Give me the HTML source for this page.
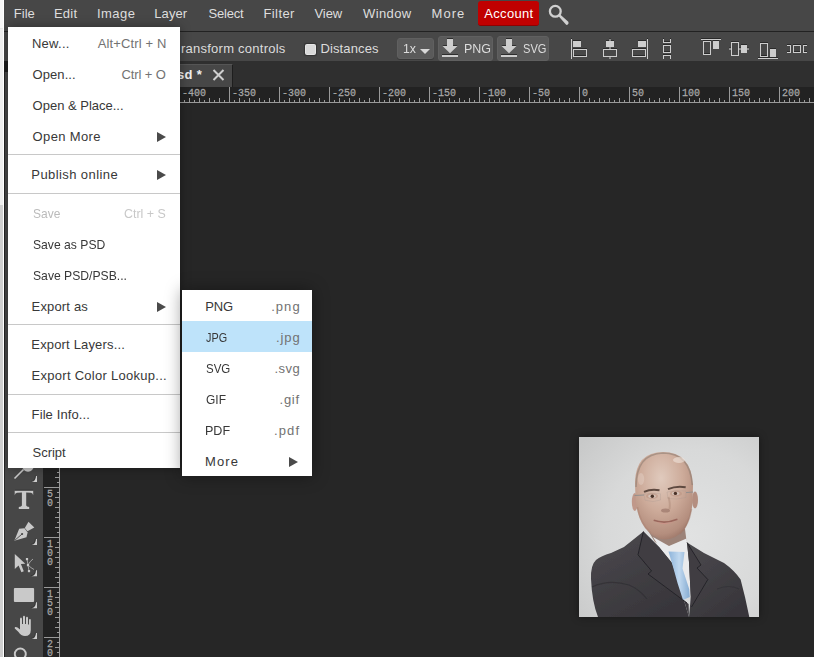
<!DOCTYPE html>
<html><head><meta charset="utf-8"><style>
*{box-sizing:border-box;margin:0;padding:0}
html,body{width:814px;height:657px;overflow:hidden;background:#262626;font-family:"Liberation Sans",sans-serif;position:relative}
.abs{position:absolute}
.tx{position:absolute;white-space:nowrap;font-family:"Liberation Sans",sans-serif}
.btn{position:absolute;background:#5a5a5a;border-radius:3px;border:1px solid #606060}
.arr{position:absolute;width:0;height:0;border-left:9px solid #4a4a4a;border-top:5px solid transparent;border-bottom:5px solid transparent}
.sep{position:absolute;left:0;width:172px;height:1px;background:#c8c8c8}
</style></head><body>
<div class="abs" style="left:4px;top:0;width:810px;height:32px;background:#474747;border-bottom:1px solid #222222"></div>
<div class="tx" style="left:13.70px;top:0px;line-height:27px;font-size:13px;color:#dedede;letter-spacing:0.061px">File</div>
<div class="tx" style="left:54.00px;top:0px;line-height:27px;font-size:13px;color:#dedede;letter-spacing:0.204px">Edit</div>
<div class="tx" style="left:97.00px;top:0px;line-height:27px;font-size:13px;color:#dedede;letter-spacing:0.450px">Image</div>
<div class="tx" style="left:154.30px;top:0px;line-height:27px;font-size:13px;color:#dedede;letter-spacing:0.078px">Layer</div>
<div class="tx" style="left:208.50px;top:0px;line-height:27px;font-size:13px;color:#dedede;letter-spacing:-0.204px">Select</div>
<div class="tx" style="left:263.50px;top:0px;line-height:27px;font-size:13px;color:#dedede;letter-spacing:0.388px">Filter</div>
<div class="tx" style="left:314.50px;top:0px;line-height:27px;font-size:13px;color:#dedede;letter-spacing:-0.085px">View</div>
<div class="tx" style="left:363.00px;top:0px;line-height:27px;font-size:13px;color:#dedede;letter-spacing:0.390px">Window</div>
<div class="tx" style="left:431.60px;top:0px;line-height:27px;font-size:13px;color:#dedede;letter-spacing:1.004px">More</div>
<div class="abs" style="left:478px;top:1px;width:61px;height:25px;background:#c00000;border-radius:3px;border-bottom:1px solid #8e0000"></div>
<div class="tx" style="left:484.30px;top:1px;line-height:25px;font-size:13px;color:#fff;letter-spacing:0.307px">Account</div>
<svg class="abs" style="left:546px;top:3px" width="24" height="24" viewBox="0 0 24 24">
<circle cx="9.3" cy="8.3" r="5.4" fill="none" stroke="#d0d0d0" stroke-width="2.3"/>
<path d="M12.6 13.2 L14.2 11.6 L22.3 18.7 Q23.2 20.4 21.8 21.6 Q20.6 22.4 19.7 21.3 Z" fill="#d0d0d0"/></svg>
<div class="abs" style="left:4px;top:32px;width:810px;height:29px;background:#474747"></div>
<div class="tx" style="left:181.00px;top:41px;line-height:16px;font-size:13px;color:#dcdcdc;letter-spacing:0.243px">ransform controls</div>
<div class="abs" style="left:305px;top:44px;width:11px;height:11px;background:#d9d9d9;border:1px solid #e6e6e6;border-radius:1.5px;box-shadow:0 0 1px 0.5px #333"></div>
<div class="tx" style="left:320.50px;top:41px;line-height:16px;font-size:13px;color:#dcdcdc;letter-spacing:0.115px">Distances</div>
<div class="btn" style="left:397px;top:38px;width:37px;height:21px;box-shadow:0 1px 0 #3a3a3a"></div>
<div class="tx" style="left:402.50px;top:41px;line-height:16px;font-size:13px;color:#dcdcdc;transform:scaleX(0.9487);transform-origin:0 0">1x</div>
<div class="abs" style="left:420px;top:49px;width:0;height:0;border-top:5px solid #d8d8d8;border-left:5px solid transparent;border-right:5px solid transparent"></div>
<div class="btn" style="left:438px;top:36px;width:55px;height:25px"></div>
<div class="btn" style="left:497px;top:36px;width:52px;height:25px"></div>
<svg class="abs" style="left:0;top:0" width="814" height="62"><g fill="#2e2e2e" transform="translate(0,-1)"><path d="M447 39H453V46H457.5L450 53.2L442.5 46H447Z"/><rect x="442" y="55" width="16" height="2"/></g><g fill="#cdcdcd"><path d="M447 39H453V46H457.5L450 53.2L442.5 46H447Z"/><rect x="442" y="55" width="16" height="2"/></g><g fill="#2e2e2e" transform="translate(59,-1)"><path d="M447 39H453V46H457.5L450 53.2L442.5 46H447Z"/><rect x="442" y="55" width="16" height="2"/></g><g fill="#cdcdcd" transform="translate(59,0)"><path d="M447 39H453V46H457.5L450 53.2L442.5 46H447Z"/><rect x="442" y="55" width="16" height="2"/></g></svg>
<div class="tx" style="left:463.54px;top:41px;line-height:16px;font-size:13px;color:#dcdcdc;transform:scaleX(0.9609);transform-origin:0 0">PNG</div>
<div class="tx" style="left:522.90px;top:41px;line-height:16px;font-size:13px;color:#dcdcdc;transform:scaleX(0.8558);transform-origin:0 0">SVG</div>
<svg class="abs" style="left:560px;top:34px" width="254" height="28" viewBox="560 34 254 28" shape-rendering="crispEdges">

<g fill="#2a2a2a" transform="translate(0,-1)">
<rect x="571" y="39" width="1" height="20"/>
<rect x="573" y="41" width="8" height="6"/>
<path d="M573 49h14v8h-14z M574 50v6h12v-6z" fill-rule="evenodd"/>
<rect x="609" y="39" width="2" height="20" fill-opacity="0.55"/>
<rect x="606" y="41" width="8" height="6"/>
<rect x="604" y="50" width="12" height="6" fill="#474747"/>
<path d="M603 49h14v8h-14z M604 50v6h12v-6z" fill-rule="evenodd"/>
<rect x="647" y="39" width="1" height="20"/>
<rect x="638" y="41" width="8" height="6"/>
<path d="M632 49h14v8h-14z M633 50v6h12v-6z" fill-rule="evenodd"/>
<path d="M663 39h1v3h6v-3h1v4h-8z"/>
<path d="M663 45h8v8h-8z M664 46v6h6v-6z" fill-rule="evenodd"/>
<path d="M663 59h1v-3h6v3h1v-4h-8z"/>
<rect x="701" y="39" width="20" height="1"/>
<path d="M703 41h8v14h-8z M704 42v12h6v-12z" fill-rule="evenodd"/>
<rect x="713" y="41" width="6" height="8"/>
<rect x="729" y="48" width="20" height="2" fill-opacity="0.55"/>
<rect x="732" y="43" width="6" height="12" fill="#474747"/>
<path d="M731 42h8v14h-8z M732 43v12h6v-12z" fill-rule="evenodd"/>
<rect x="741" y="45" width="6" height="8"/>
<rect x="758" y="58" width="20" height="1"/>
<path d="M760 43h8v14h-8z M761 44v12h6v-12z" fill-rule="evenodd"/>
<rect x="770" y="49" width="6" height="8"/>
<path d="M787 45h4v8h-4v-1h3v-6h-3z"/>
<path d="M793 45h8v8h-8z M794 46v6h6v-6z" fill-rule="evenodd"/>
<path d="M807 45h-4v8h4v-1h-3v-6h3z"/>
</g>
<g fill="#cdcdcd">
<rect x="571" y="39" width="1" height="20"/>
<rect x="573" y="41" width="8" height="6"/>
<path d="M573 49h14v8h-14z M574 50v6h12v-6z" fill-rule="evenodd"/>
<rect x="609" y="39" width="2" height="20" fill-opacity="0.55"/>
<rect x="606" y="41" width="8" height="6"/>
<rect x="604" y="50" width="12" height="6" fill="#474747"/>
<path d="M603 49h14v8h-14z M604 50v6h12v-6z" fill-rule="evenodd"/>
<rect x="647" y="39" width="1" height="20"/>
<rect x="638" y="41" width="8" height="6"/>
<path d="M632 49h14v8h-14z M633 50v6h12v-6z" fill-rule="evenodd"/>
<path d="M663 39h1v3h6v-3h1v4h-8z"/>
<path d="M663 45h8v8h-8z M664 46v6h6v-6z" fill-rule="evenodd"/>
<path d="M663 59h1v-3h6v3h1v-4h-8z"/>
<rect x="701" y="39" width="20" height="1"/>
<path d="M703 41h8v14h-8z M704 42v12h6v-12z" fill-rule="evenodd"/>
<rect x="713" y="41" width="6" height="8"/>
<rect x="729" y="48" width="20" height="2" fill-opacity="0.55"/>
<rect x="732" y="43" width="6" height="12" fill="#474747"/>
<path d="M731 42h8v14h-8z M732 43v12h6v-12z" fill-rule="evenodd"/>
<rect x="741" y="45" width="6" height="8"/>
<rect x="758" y="58" width="20" height="1"/>
<path d="M760 43h8v14h-8z M761 44v12h6v-12z" fill-rule="evenodd"/>
<rect x="770" y="49" width="6" height="8"/>
<path d="M787 45h4v8h-4v-1h3v-6h-3z"/>
<path d="M793 45h8v8h-8z M794 46v6h6v-6z" fill-rule="evenodd"/>
<path d="M807 45h-4v8h4v-1h-3v-6h3z"/>
</g>
</svg>

<div class="abs" style="left:4px;top:61px;width:810px;height:26px;background:#2f2f2f"></div>
<div class="abs" style="left:60px;top:64px;width:173px;height:23px;background:#474747;border-top:1px solid #555;border-right:1px solid #1e1e1e"></div>
<div class="abs" style="right:612px;top:68px;font-size:13px;font-weight:bold;color:#eee;line-height:14px;white-space:nowrap;letter-spacing:0.3px">Untitled.psd *</div>
<svg class="abs" style="left:212px;top:69px" width="13" height="12" viewBox="0 0 13 12"><path d="M1.5 1L11.5 11M11.5 1L1.5 11" stroke="#cfcfcf" stroke-width="2"/></svg>
<div class="abs" style="left:4px;top:61px;width:39px;height:11px;background:#1e1e1e"></div>
<div class="abs" style="left:4px;top:72px;width:39px;height:585px;background:#474747;border-left:1px solid #262626"></div>
<svg class="abs" id="toolsvg" style="left:0;top:440px" width="43" height="217" viewBox="0 440 43 217">
<g fill="#c9c9c9">
<!-- dodge -->
<circle cx="28" cy="466" r="5.8"/>
<path d="M14.5 478.5 L23.5 469.5" stroke="#c9c9c9" stroke-width="1.6"/>
<!-- T -->
<rect x="15" y="489.8" width="18" height="1" fill="#2c2c2c"/><path d="M14.7 490.8 H33.2 V495.2 Q32.8 493.3 31 492.8 Q29.5 492.6 26.2 492.6 V505.5 Q26.5 506.9 29.2 507 V509.1 H18.8 V507 Q21.6 506.9 21.9 505.5 V492.6 Q18.5 492.6 17 492.8 Q15.2 493.3 14.7 495.2 Z"/>
<!-- pen -->
<path d="M14.3 540.8 L19.2 528.7 L24.5 528.2 L27.6 532.4 L26.5 537.2 Z"/>
<path d="M24.8 527.9 L28.5 521.8 L34.3 527.4 L27.5 531.3 Z"/>
<path d="M14.8 540.3 L22.1 534" stroke="#474747" stroke-width="0.9"/>
<circle cx="22.1" cy="534" r="1.1" fill="#474747"/>
<!-- path select -->
<path d="M14.8 554.1 L25.3 563.8 L20.9 564 L23.8 571.3 L21.4 572.3 L18.6 565.6 L14.8 569 Z"/>
<path d="M27 559 L28 565 L29 571 M28 565 Q30 561 33 559 M28 565 Q31 568 34 569.5" stroke="#c9c9c9" stroke-width="0.7" fill="none"/>
<rect x="25.9" y="558" width="2.2" height="2.2"/>
<rect x="26.9" y="564" width="2.2" height="2.2"/>
<rect x="27.9" y="570" width="2.2" height="2.2"/>
<!-- rect -->
<rect x="13.9" y="588" width="20.2" height="14" rx="1"/>
<!-- hand -->
<path d="M20 625 L20 619 Q20 617.5 21 617.5 Q22 617.5 22 619 L22 624 L23 624 L23 617 Q23 615.8 24 615.8 Q25 615.8 25 617 L25 624 L26 624 L26 618 Q26 616.8 27 616.8 Q28 616.8 28 618 L28 624.5 L29 624.5 L29 620 Q29 619 30 619 Q30.8 619 30.8 620 L30.8 630 Q30.8 636 25 636 Q21 636 18.5 632 L14.8 628.5 Q14.3 627.5 15.3 627 Q16.3 626.6 17.5 627.6 L20 629.5 Z"/>
<!-- zoom circle -->
<circle cx="20.3" cy="654" r="5.5" fill="none" stroke="#c9c9c9" stroke-width="1.9"/>
<!-- corner marks -->

<g transform="translate(0,-126.2)"><path d="M30.8 607.6 Q35.2 607.2 35.4 601.8" stroke="#333" stroke-width="1" fill="none" opacity="0.8"/><path d="M37 602.2 V608.2 H31.3 Q35.8 607.8 36 602.2 Z" fill="#cdcdcd"/></g>
<g transform="translate(0,-63.2)"><path d="M30.8 607.6 Q35.2 607.2 35.4 601.8" stroke="#333" stroke-width="1" fill="none" opacity="0.8"/><path d="M37 602.2 V608.2 H31.3 Q35.8 607.8 36 602.2 Z" fill="#cdcdcd"/></g>
<g transform="translate(0,-31.9)"><path d="M30.8 607.6 Q35.2 607.2 35.4 601.8" stroke="#333" stroke-width="1" fill="none" opacity="0.8"/><path d="M37 602.2 V608.2 H31.3 Q35.8 607.8 36 602.2 Z" fill="#cdcdcd"/></g>
<g><path d="M30.8 607.6 Q35.2 607.2 35.4 601.8" stroke="#333" stroke-width="1" fill="none" opacity="0.8"/><path d="M37 602.2 V608.2 H31.3 Q35.8 607.8 36 602.2 Z" fill="#cdcdcd"/></g>
<g transform="translate(0,30.8)"><path d="M30.8 607.6 Q35.2 607.2 35.4 601.8" stroke="#333" stroke-width="1" fill="none" opacity="0.8"/><path d="M37 602.2 V608.2 H31.3 Q35.8 607.8 36 602.2 Z" fill="#cdcdcd"/></g>
</g>
</svg>

<div class="abs" style="left:43px;top:87px;width:771px;height:16px;background:#222222"></div>
<div class="abs" style="left:43px;top:87px;width:17px;height:570px;background:#222222"></div>
<svg class="abs" style="left:0;top:0" width="814" height="657"><style>.rt{font-family:"Liberation Mono",monospace;font-size:11.5px;fill:#a8a8a8;stroke:#a8a8a8;stroke-width:0.25px}</style><rect x="43" y="102" width="771" height="1" fill="#9a9a9a"/><rect x="64" y="100" width="1" height="2" fill="#9a9a9a"/><rect x="69" y="98" width="1" height="4" fill="#9a9a9a"/><rect x="74" y="100" width="1" height="2" fill="#9a9a9a"/><rect x="79" y="87" width="1" height="15" fill="#9a9a9a"/><text transform="translate(82,96) scale(0.87,1)" class="rt">-500</text><rect x="84" y="100" width="1" height="2" fill="#9a9a9a"/><rect x="89" y="98" width="1" height="4" fill="#9a9a9a"/><rect x="94" y="100" width="1" height="2" fill="#9a9a9a"/><rect x="99" y="98" width="1" height="4" fill="#9a9a9a"/><rect x="104" y="100" width="1" height="2" fill="#9a9a9a"/><rect x="109" y="98" width="1" height="4" fill="#9a9a9a"/><rect x="114" y="100" width="1" height="2" fill="#9a9a9a"/><rect x="119" y="98" width="1" height="4" fill="#9a9a9a"/><rect x="124" y="100" width="1" height="2" fill="#9a9a9a"/><rect x="129" y="87" width="1" height="15" fill="#9a9a9a"/><text transform="translate(132,96) scale(0.87,1)" class="rt">-450</text><rect x="134" y="100" width="1" height="2" fill="#9a9a9a"/><rect x="139" y="98" width="1" height="4" fill="#9a9a9a"/><rect x="144" y="100" width="1" height="2" fill="#9a9a9a"/><rect x="149" y="98" width="1" height="4" fill="#9a9a9a"/><rect x="154" y="100" width="1" height="2" fill="#9a9a9a"/><rect x="159" y="98" width="1" height="4" fill="#9a9a9a"/><rect x="164" y="100" width="1" height="2" fill="#9a9a9a"/><rect x="169" y="98" width="1" height="4" fill="#9a9a9a"/><rect x="174" y="100" width="1" height="2" fill="#9a9a9a"/><rect x="179" y="87" width="1" height="15" fill="#9a9a9a"/><text transform="translate(182,96) scale(0.87,1)" class="rt">-400</text><rect x="184" y="100" width="1" height="2" fill="#9a9a9a"/><rect x="189" y="98" width="1" height="4" fill="#9a9a9a"/><rect x="194" y="100" width="1" height="2" fill="#9a9a9a"/><rect x="199" y="98" width="1" height="4" fill="#9a9a9a"/><rect x="204" y="100" width="1" height="2" fill="#9a9a9a"/><rect x="209" y="98" width="1" height="4" fill="#9a9a9a"/><rect x="214" y="100" width="1" height="2" fill="#9a9a9a"/><rect x="219" y="98" width="1" height="4" fill="#9a9a9a"/><rect x="224" y="100" width="1" height="2" fill="#9a9a9a"/><rect x="229" y="87" width="1" height="15" fill="#9a9a9a"/><text transform="translate(232,96) scale(0.87,1)" class="rt">-350</text><rect x="234" y="100" width="1" height="2" fill="#9a9a9a"/><rect x="239" y="98" width="1" height="4" fill="#9a9a9a"/><rect x="244" y="100" width="1" height="2" fill="#9a9a9a"/><rect x="249" y="98" width="1" height="4" fill="#9a9a9a"/><rect x="254" y="100" width="1" height="2" fill="#9a9a9a"/><rect x="259" y="98" width="1" height="4" fill="#9a9a9a"/><rect x="264" y="100" width="1" height="2" fill="#9a9a9a"/><rect x="269" y="98" width="1" height="4" fill="#9a9a9a"/><rect x="274" y="100" width="1" height="2" fill="#9a9a9a"/><rect x="279" y="87" width="1" height="15" fill="#9a9a9a"/><text transform="translate(282,96) scale(0.87,1)" class="rt">-300</text><rect x="284" y="100" width="1" height="2" fill="#9a9a9a"/><rect x="289" y="98" width="1" height="4" fill="#9a9a9a"/><rect x="294" y="100" width="1" height="2" fill="#9a9a9a"/><rect x="299" y="98" width="1" height="4" fill="#9a9a9a"/><rect x="304" y="100" width="1" height="2" fill="#9a9a9a"/><rect x="309" y="98" width="1" height="4" fill="#9a9a9a"/><rect x="314" y="100" width="1" height="2" fill="#9a9a9a"/><rect x="319" y="98" width="1" height="4" fill="#9a9a9a"/><rect x="324" y="100" width="1" height="2" fill="#9a9a9a"/><rect x="329" y="87" width="1" height="15" fill="#9a9a9a"/><text transform="translate(332,96) scale(0.87,1)" class="rt">-250</text><rect x="334" y="100" width="1" height="2" fill="#9a9a9a"/><rect x="339" y="98" width="1" height="4" fill="#9a9a9a"/><rect x="344" y="100" width="1" height="2" fill="#9a9a9a"/><rect x="349" y="98" width="1" height="4" fill="#9a9a9a"/><rect x="354" y="100" width="1" height="2" fill="#9a9a9a"/><rect x="359" y="98" width="1" height="4" fill="#9a9a9a"/><rect x="364" y="100" width="1" height="2" fill="#9a9a9a"/><rect x="369" y="98" width="1" height="4" fill="#9a9a9a"/><rect x="374" y="100" width="1" height="2" fill="#9a9a9a"/><rect x="379" y="87" width="1" height="15" fill="#9a9a9a"/><text transform="translate(382,96) scale(0.87,1)" class="rt">-200</text><rect x="384" y="100" width="1" height="2" fill="#9a9a9a"/><rect x="389" y="98" width="1" height="4" fill="#9a9a9a"/><rect x="394" y="100" width="1" height="2" fill="#9a9a9a"/><rect x="399" y="98" width="1" height="4" fill="#9a9a9a"/><rect x="404" y="100" width="1" height="2" fill="#9a9a9a"/><rect x="409" y="98" width="1" height="4" fill="#9a9a9a"/><rect x="414" y="100" width="1" height="2" fill="#9a9a9a"/><rect x="419" y="98" width="1" height="4" fill="#9a9a9a"/><rect x="424" y="100" width="1" height="2" fill="#9a9a9a"/><rect x="429" y="87" width="1" height="15" fill="#9a9a9a"/><text transform="translate(432,96) scale(0.87,1)" class="rt">-150</text><rect x="434" y="100" width="1" height="2" fill="#9a9a9a"/><rect x="439" y="98" width="1" height="4" fill="#9a9a9a"/><rect x="444" y="100" width="1" height="2" fill="#9a9a9a"/><rect x="449" y="98" width="1" height="4" fill="#9a9a9a"/><rect x="454" y="100" width="1" height="2" fill="#9a9a9a"/><rect x="459" y="98" width="1" height="4" fill="#9a9a9a"/><rect x="464" y="100" width="1" height="2" fill="#9a9a9a"/><rect x="469" y="98" width="1" height="4" fill="#9a9a9a"/><rect x="474" y="100" width="1" height="2" fill="#9a9a9a"/><rect x="479" y="87" width="1" height="15" fill="#9a9a9a"/><text transform="translate(482,96) scale(0.87,1)" class="rt">-100</text><rect x="484" y="100" width="1" height="2" fill="#9a9a9a"/><rect x="489" y="98" width="1" height="4" fill="#9a9a9a"/><rect x="494" y="100" width="1" height="2" fill="#9a9a9a"/><rect x="499" y="98" width="1" height="4" fill="#9a9a9a"/><rect x="504" y="100" width="1" height="2" fill="#9a9a9a"/><rect x="509" y="98" width="1" height="4" fill="#9a9a9a"/><rect x="514" y="100" width="1" height="2" fill="#9a9a9a"/><rect x="519" y="98" width="1" height="4" fill="#9a9a9a"/><rect x="524" y="100" width="1" height="2" fill="#9a9a9a"/><rect x="529" y="87" width="1" height="15" fill="#9a9a9a"/><text transform="translate(532,96) scale(0.87,1)" class="rt">-50</text><rect x="534" y="100" width="1" height="2" fill="#9a9a9a"/><rect x="539" y="98" width="1" height="4" fill="#9a9a9a"/><rect x="544" y="100" width="1" height="2" fill="#9a9a9a"/><rect x="549" y="98" width="1" height="4" fill="#9a9a9a"/><rect x="554" y="100" width="1" height="2" fill="#9a9a9a"/><rect x="559" y="98" width="1" height="4" fill="#9a9a9a"/><rect x="564" y="100" width="1" height="2" fill="#9a9a9a"/><rect x="569" y="98" width="1" height="4" fill="#9a9a9a"/><rect x="574" y="100" width="1" height="2" fill="#9a9a9a"/><rect x="579" y="87" width="1" height="15" fill="#9a9a9a"/><text transform="translate(582,96) scale(0.87,1)" class="rt">0</text><rect x="584" y="100" width="1" height="2" fill="#9a9a9a"/><rect x="589" y="98" width="1" height="4" fill="#9a9a9a"/><rect x="594" y="100" width="1" height="2" fill="#9a9a9a"/><rect x="599" y="98" width="1" height="4" fill="#9a9a9a"/><rect x="604" y="100" width="1" height="2" fill="#9a9a9a"/><rect x="609" y="98" width="1" height="4" fill="#9a9a9a"/><rect x="614" y="100" width="1" height="2" fill="#9a9a9a"/><rect x="619" y="98" width="1" height="4" fill="#9a9a9a"/><rect x="624" y="100" width="1" height="2" fill="#9a9a9a"/><rect x="629" y="87" width="1" height="15" fill="#9a9a9a"/><text transform="translate(632,96) scale(0.87,1)" class="rt">50</text><rect x="634" y="100" width="1" height="2" fill="#9a9a9a"/><rect x="639" y="98" width="1" height="4" fill="#9a9a9a"/><rect x="644" y="100" width="1" height="2" fill="#9a9a9a"/><rect x="649" y="98" width="1" height="4" fill="#9a9a9a"/><rect x="654" y="100" width="1" height="2" fill="#9a9a9a"/><rect x="659" y="98" width="1" height="4" fill="#9a9a9a"/><rect x="664" y="100" width="1" height="2" fill="#9a9a9a"/><rect x="669" y="98" width="1" height="4" fill="#9a9a9a"/><rect x="674" y="100" width="1" height="2" fill="#9a9a9a"/><rect x="679" y="87" width="1" height="15" fill="#9a9a9a"/><text transform="translate(682,96) scale(0.87,1)" class="rt">100</text><rect x="684" y="100" width="1" height="2" fill="#9a9a9a"/><rect x="689" y="98" width="1" height="4" fill="#9a9a9a"/><rect x="694" y="100" width="1" height="2" fill="#9a9a9a"/><rect x="699" y="98" width="1" height="4" fill="#9a9a9a"/><rect x="704" y="100" width="1" height="2" fill="#9a9a9a"/><rect x="709" y="98" width="1" height="4" fill="#9a9a9a"/><rect x="714" y="100" width="1" height="2" fill="#9a9a9a"/><rect x="719" y="98" width="1" height="4" fill="#9a9a9a"/><rect x="724" y="100" width="1" height="2" fill="#9a9a9a"/><rect x="729" y="87" width="1" height="15" fill="#9a9a9a"/><text transform="translate(732,96) scale(0.87,1)" class="rt">150</text><rect x="734" y="100" width="1" height="2" fill="#9a9a9a"/><rect x="739" y="98" width="1" height="4" fill="#9a9a9a"/><rect x="744" y="100" width="1" height="2" fill="#9a9a9a"/><rect x="749" y="98" width="1" height="4" fill="#9a9a9a"/><rect x="754" y="100" width="1" height="2" fill="#9a9a9a"/><rect x="759" y="98" width="1" height="4" fill="#9a9a9a"/><rect x="764" y="100" width="1" height="2" fill="#9a9a9a"/><rect x="769" y="98" width="1" height="4" fill="#9a9a9a"/><rect x="774" y="100" width="1" height="2" fill="#9a9a9a"/><rect x="779" y="87" width="1" height="15" fill="#9a9a9a"/><text transform="translate(782,96) scale(0.87,1)" class="rt">200</text><rect x="784" y="100" width="1" height="2" fill="#9a9a9a"/><rect x="789" y="98" width="1" height="4" fill="#9a9a9a"/><rect x="794" y="100" width="1" height="2" fill="#9a9a9a"/><rect x="799" y="98" width="1" height="4" fill="#9a9a9a"/><rect x="804" y="100" width="1" height="2" fill="#9a9a9a"/><rect x="809" y="98" width="1" height="4" fill="#9a9a9a"/><rect x="814" y="100" width="1" height="2" fill="#9a9a9a"/><rect x="59" y="103" width="1" height="554" fill="#9a9a9a"/><rect x="55" y="107" width="4" height="1" fill="#9a9a9a"/><rect x="57" y="112" width="2" height="1" fill="#9a9a9a"/><rect x="55" y="117" width="4" height="1" fill="#9a9a9a"/><rect x="57" y="122" width="2" height="1" fill="#9a9a9a"/><rect x="55" y="127" width="4" height="1" fill="#9a9a9a"/><rect x="57" y="132" width="2" height="1" fill="#9a9a9a"/><rect x="44" y="137" width="15" height="1" fill="#9a9a9a"/><text transform="translate(47,147) scale(0.87,1)" class="rt">-</text><text transform="translate(47,156) scale(0.87,1)" class="rt">3</text><text transform="translate(47,165) scale(0.87,1)" class="rt">0</text><text transform="translate(47,174) scale(0.87,1)" class="rt">0</text><rect x="57" y="142" width="2" height="1" fill="#9a9a9a"/><rect x="55" y="147" width="4" height="1" fill="#9a9a9a"/><rect x="57" y="152" width="2" height="1" fill="#9a9a9a"/><rect x="55" y="157" width="4" height="1" fill="#9a9a9a"/><rect x="57" y="162" width="2" height="1" fill="#9a9a9a"/><rect x="55" y="167" width="4" height="1" fill="#9a9a9a"/><rect x="57" y="172" width="2" height="1" fill="#9a9a9a"/><rect x="55" y="177" width="4" height="1" fill="#9a9a9a"/><rect x="57" y="182" width="2" height="1" fill="#9a9a9a"/><rect x="44" y="187" width="15" height="1" fill="#9a9a9a"/><text transform="translate(47,197) scale(0.87,1)" class="rt">-</text><text transform="translate(47,206) scale(0.87,1)" class="rt">2</text><text transform="translate(47,215) scale(0.87,1)" class="rt">5</text><text transform="translate(47,224) scale(0.87,1)" class="rt">0</text><rect x="57" y="192" width="2" height="1" fill="#9a9a9a"/><rect x="55" y="197" width="4" height="1" fill="#9a9a9a"/><rect x="57" y="202" width="2" height="1" fill="#9a9a9a"/><rect x="55" y="207" width="4" height="1" fill="#9a9a9a"/><rect x="57" y="212" width="2" height="1" fill="#9a9a9a"/><rect x="55" y="217" width="4" height="1" fill="#9a9a9a"/><rect x="57" y="222" width="2" height="1" fill="#9a9a9a"/><rect x="55" y="227" width="4" height="1" fill="#9a9a9a"/><rect x="57" y="232" width="2" height="1" fill="#9a9a9a"/><rect x="44" y="237" width="15" height="1" fill="#9a9a9a"/><text transform="translate(47,247) scale(0.87,1)" class="rt">-</text><text transform="translate(47,256) scale(0.87,1)" class="rt">2</text><text transform="translate(47,265) scale(0.87,1)" class="rt">0</text><text transform="translate(47,274) scale(0.87,1)" class="rt">0</text><rect x="57" y="242" width="2" height="1" fill="#9a9a9a"/><rect x="55" y="247" width="4" height="1" fill="#9a9a9a"/><rect x="57" y="252" width="2" height="1" fill="#9a9a9a"/><rect x="55" y="257" width="4" height="1" fill="#9a9a9a"/><rect x="57" y="262" width="2" height="1" fill="#9a9a9a"/><rect x="55" y="267" width="4" height="1" fill="#9a9a9a"/><rect x="57" y="272" width="2" height="1" fill="#9a9a9a"/><rect x="55" y="277" width="4" height="1" fill="#9a9a9a"/><rect x="57" y="282" width="2" height="1" fill="#9a9a9a"/><rect x="44" y="287" width="15" height="1" fill="#9a9a9a"/><text transform="translate(47,297) scale(0.87,1)" class="rt">-</text><text transform="translate(47,306) scale(0.87,1)" class="rt">1</text><text transform="translate(47,315) scale(0.87,1)" class="rt">5</text><text transform="translate(47,324) scale(0.87,1)" class="rt">0</text><rect x="57" y="292" width="2" height="1" fill="#9a9a9a"/><rect x="55" y="297" width="4" height="1" fill="#9a9a9a"/><rect x="57" y="302" width="2" height="1" fill="#9a9a9a"/><rect x="55" y="307" width="4" height="1" fill="#9a9a9a"/><rect x="57" y="312" width="2" height="1" fill="#9a9a9a"/><rect x="55" y="317" width="4" height="1" fill="#9a9a9a"/><rect x="57" y="322" width="2" height="1" fill="#9a9a9a"/><rect x="55" y="327" width="4" height="1" fill="#9a9a9a"/><rect x="57" y="332" width="2" height="1" fill="#9a9a9a"/><rect x="44" y="337" width="15" height="1" fill="#9a9a9a"/><text transform="translate(47,347) scale(0.87,1)" class="rt">-</text><text transform="translate(47,356) scale(0.87,1)" class="rt">1</text><text transform="translate(47,365) scale(0.87,1)" class="rt">0</text><text transform="translate(47,374) scale(0.87,1)" class="rt">0</text><rect x="57" y="342" width="2" height="1" fill="#9a9a9a"/><rect x="55" y="347" width="4" height="1" fill="#9a9a9a"/><rect x="57" y="352" width="2" height="1" fill="#9a9a9a"/><rect x="55" y="357" width="4" height="1" fill="#9a9a9a"/><rect x="57" y="362" width="2" height="1" fill="#9a9a9a"/><rect x="55" y="367" width="4" height="1" fill="#9a9a9a"/><rect x="57" y="372" width="2" height="1" fill="#9a9a9a"/><rect x="55" y="377" width="4" height="1" fill="#9a9a9a"/><rect x="57" y="382" width="2" height="1" fill="#9a9a9a"/><rect x="44" y="387" width="15" height="1" fill="#9a9a9a"/><text transform="translate(47,397) scale(0.87,1)" class="rt">-</text><text transform="translate(47,406) scale(0.87,1)" class="rt">5</text><text transform="translate(47,415) scale(0.87,1)" class="rt">0</text><rect x="57" y="392" width="2" height="1" fill="#9a9a9a"/><rect x="55" y="397" width="4" height="1" fill="#9a9a9a"/><rect x="57" y="402" width="2" height="1" fill="#9a9a9a"/><rect x="55" y="407" width="4" height="1" fill="#9a9a9a"/><rect x="57" y="412" width="2" height="1" fill="#9a9a9a"/><rect x="55" y="417" width="4" height="1" fill="#9a9a9a"/><rect x="57" y="422" width="2" height="1" fill="#9a9a9a"/><rect x="55" y="427" width="4" height="1" fill="#9a9a9a"/><rect x="57" y="432" width="2" height="1" fill="#9a9a9a"/><rect x="44" y="437" width="15" height="1" fill="#9a9a9a"/><text transform="translate(47,447) scale(0.87,1)" class="rt">0</text><rect x="57" y="442" width="2" height="1" fill="#9a9a9a"/><rect x="55" y="447" width="4" height="1" fill="#9a9a9a"/><rect x="57" y="452" width="2" height="1" fill="#9a9a9a"/><rect x="55" y="457" width="4" height="1" fill="#9a9a9a"/><rect x="57" y="462" width="2" height="1" fill="#9a9a9a"/><rect x="55" y="467" width="4" height="1" fill="#9a9a9a"/><rect x="57" y="472" width="2" height="1" fill="#9a9a9a"/><rect x="55" y="477" width="4" height="1" fill="#9a9a9a"/><rect x="57" y="482" width="2" height="1" fill="#9a9a9a"/><rect x="44" y="487" width="15" height="1" fill="#9a9a9a"/><text transform="translate(47,497) scale(0.87,1)" class="rt">5</text><text transform="translate(47,506) scale(0.87,1)" class="rt">0</text><rect x="57" y="492" width="2" height="1" fill="#9a9a9a"/><rect x="55" y="497" width="4" height="1" fill="#9a9a9a"/><rect x="57" y="502" width="2" height="1" fill="#9a9a9a"/><rect x="55" y="507" width="4" height="1" fill="#9a9a9a"/><rect x="57" y="512" width="2" height="1" fill="#9a9a9a"/><rect x="55" y="517" width="4" height="1" fill="#9a9a9a"/><rect x="57" y="522" width="2" height="1" fill="#9a9a9a"/><rect x="55" y="527" width="4" height="1" fill="#9a9a9a"/><rect x="57" y="532" width="2" height="1" fill="#9a9a9a"/><rect x="44" y="537" width="15" height="1" fill="#9a9a9a"/><text transform="translate(47,547) scale(0.87,1)" class="rt">1</text><text transform="translate(47,556) scale(0.87,1)" class="rt">0</text><text transform="translate(47,565) scale(0.87,1)" class="rt">0</text><rect x="57" y="542" width="2" height="1" fill="#9a9a9a"/><rect x="55" y="547" width="4" height="1" fill="#9a9a9a"/><rect x="57" y="552" width="2" height="1" fill="#9a9a9a"/><rect x="55" y="557" width="4" height="1" fill="#9a9a9a"/><rect x="57" y="562" width="2" height="1" fill="#9a9a9a"/><rect x="55" y="567" width="4" height="1" fill="#9a9a9a"/><rect x="57" y="572" width="2" height="1" fill="#9a9a9a"/><rect x="55" y="577" width="4" height="1" fill="#9a9a9a"/><rect x="57" y="582" width="2" height="1" fill="#9a9a9a"/><rect x="44" y="587" width="15" height="1" fill="#9a9a9a"/><text transform="translate(47,597) scale(0.87,1)" class="rt">1</text><text transform="translate(47,606) scale(0.87,1)" class="rt">5</text><text transform="translate(47,615) scale(0.87,1)" class="rt">0</text><rect x="57" y="592" width="2" height="1" fill="#9a9a9a"/><rect x="55" y="597" width="4" height="1" fill="#9a9a9a"/><rect x="57" y="602" width="2" height="1" fill="#9a9a9a"/><rect x="55" y="607" width="4" height="1" fill="#9a9a9a"/><rect x="57" y="612" width="2" height="1" fill="#9a9a9a"/><rect x="55" y="617" width="4" height="1" fill="#9a9a9a"/><rect x="57" y="622" width="2" height="1" fill="#9a9a9a"/><rect x="55" y="627" width="4" height="1" fill="#9a9a9a"/><rect x="57" y="632" width="2" height="1" fill="#9a9a9a"/><rect x="44" y="637" width="15" height="1" fill="#9a9a9a"/><text transform="translate(47,647) scale(0.87,1)" class="rt">2</text><text transform="translate(47,656) scale(0.87,1)" class="rt">0</text><text transform="translate(47,665) scale(0.87,1)" class="rt">0</text><rect x="57" y="642" width="2" height="1" fill="#9a9a9a"/><rect x="55" y="647" width="4" height="1" fill="#9a9a9a"/><rect x="57" y="652" width="2" height="1" fill="#9a9a9a"/><rect x="55" y="657" width="4" height="1" fill="#9a9a9a"/></svg>
<div class="abs" style="left:579px;top:437px;width:180px;height:180px;box-shadow:0 0 8px rgba(0,0,0,.4)"></div>
<svg class="abs" style="left:579px;top:437px" width="180" height="180" viewBox="0 0 180 180">
<defs>
<radialGradient id="bg" cx="0.62" cy="0.55" r="0.8"><stop offset="0" stop-color="#e1e2e2"/><stop offset="0.6" stop-color="#d8d9d9"/><stop offset="1" stop-color="#c8c9c9"/></radialGradient>
<radialGradient id="skin" cx="0.45" cy="0.3" r="0.75"><stop offset="0" stop-color="#e0cabd"/><stop offset="0.5" stop-color="#cdab9a"/><stop offset="0.85" stop-color="#b48e7e"/><stop offset="1" stop-color="#987264"/></radialGradient>
<linearGradient id="suit" x1="0" y1="0" x2="0.6" y2="1"><stop offset="0" stop-color="#4c4a4e"/><stop offset="1" stop-color="#38363b"/></linearGradient>
<linearGradient id="tie" x1="0" y1="0" x2="1" y2="0"><stop offset="0" stop-color="#8eb4da"/><stop offset="0.5" stop-color="#c0d8ef"/><stop offset="1" stop-color="#86acd2"/></linearGradient>
<filter id="soft" x="-5%" y="-5%" width="110%" height="110%"><feGaussianBlur stdDeviation="0.7"/></filter>
</defs>
<rect width="180" height="180" fill="url(#bg)"/>
<g filter="url(#soft)">
<!-- neck shadow -->
<path d="M68 92 L106 92 L107.5 104 L90 114 L76 105 Z" fill="#9c8379"/>
<!-- shirt -->
<path d="M74 100 L90 109 L107.5 101.5 L110 125 L111.8 160 L104 160 L93 126 L80 110 Z" fill="#e9eaec"/>
<!-- suit left -->
<path d="M19 180 Q13 165 12 142 Q11.5 128 17 123 Q22 119 32 116 L45 110 L64.4 94.5 L80 110 L93 126 L104 160 L110 180 Z" fill="url(#suit)"/>
<!-- suit right -->
<path d="M108 105.5 L125 116 L145 126 Q155 133 161.6 142.5 L166 160 L170.3 180 L110 180 L111.8 160 L110 125 Z" fill="url(#suit)"/>
<!-- lapels -->
<path d="M64.4 94.5 L59 117.8 L72.6 134 L69 137 L109.6 167 L110 180 L104 160 L93 126 L80 110 Z" fill="#3f3d42"/>
<path d="M64.4 94.5 L59 117.8 L72.6 134 L69 137 L108 166" fill="none" stroke="#252429" stroke-width="1"/>
<path d="M108 105.5 L122 128 L118 131 L128.8 142.5 L112 170 L111.8 160 L110 125 Z" fill="#3f3d42"/>
<path d="M108 105.5 L122 128 L118 131 L128.8 142.5 L112.5 170" fill="none" stroke="#252429" stroke-width="1"/>
<!-- folds -->
<path d="M13 150 Q30 142 50 148 Q60 152 68 162" fill="none" stroke="#2c2b2f" stroke-width="1.2" opacity="0.6"/>
<path d="M138 152 Q150 147 160 152" fill="none" stroke="#2c2b2f" stroke-width="1" opacity="0.5"/>
<!-- tie -->
<path d="M89.5 114.5 L105.5 115 L103.5 131.5 L110.2 152 L110.8 160 L104 163 L98.5 146 L94.5 131.5 Z" fill="url(#tie)"/>
<!-- ears -->
<ellipse cx="55.8" cy="65" rx="3" ry="9" fill="#c0988a"/>
<ellipse cx="116" cy="63" rx="3" ry="8.5" fill="#b48e80"/>
<!-- head -->
<path d="M84 15 Q57 15 56 45 L56.5 62 Q58 80 66 91 Q75 102 86 102.5 Q97 102 105 93 Q112 82 113.5 66 L114 48 Q112 15 84 15 Z" fill="url(#skin)"/>
<!-- hair fringe -->
<path d="M57 50 Q57 17 84 16 Q111 16 113.3 48" fill="none" stroke="#8a7a70" stroke-width="1.6" opacity="0.55"/>
<!-- highlights -->
<ellipse cx="100" cy="23" rx="6" ry="3" fill="#f0e4dc" opacity="0.6"/>
<ellipse cx="62" cy="42" rx="3.2" ry="6" fill="#eadcd4" opacity="0.35"/>
<!-- brows -->
<path d="M65 54.8 Q72 51.6 80.5 53.2" stroke="#5e4a40" stroke-width="2" fill="none"/>
<path d="M89 52.2 Q97 48.6 106.7 50.2" stroke="#5e4a40" stroke-width="2" fill="none"/>
<!-- eye sockets -->
<ellipse cx="73" cy="59" rx="6" ry="3" fill="#b8907e" opacity="0.5"/>
<ellipse cx="97" cy="56.5" rx="6" ry="3" fill="#b8907e" opacity="0.5"/>
<!-- eyes -->
<ellipse cx="73" cy="59.2" rx="3.8" ry="1.7" fill="#d6c4ba"/>
<ellipse cx="96.6" cy="56.5" rx="3.8" ry="1.7" fill="#d6c4ba"/>
<circle cx="73.3" cy="59.2" r="1.7" fill="#4a3028"/>
<circle cx="96.4" cy="56.4" r="1.7" fill="#4a3028"/>
<!-- glasses -->
<path d="M55.5 58.5 L65 58 M107 55.6 L114 55" stroke="#8c8c8c" stroke-width="0.9" fill="none"/>
<path d="M65 57.2 Q72 55.2 81.5 56.8 L81.5 63 Q74 66 66 63.2 Z M88 55 Q97 52.8 107 54 L107 60.5 Q98 63 89 61.5 Z" fill="none" stroke="#a89890" stroke-width="0.6" opacity="0.5"/>
<!-- nose -->
<path d="M89.5 60 Q91.5 67 90.5 72" stroke="#a88474" stroke-width="2" fill="none" opacity="0.45"/>
<ellipse cx="86.5" cy="73.5" rx="4.5" ry="2" fill="#8e685c" opacity="0.55"/>
<!-- mouth -->
<path d="M74.7 83.3 Q86 87.3 98.4 82.3" stroke="#9a665c" stroke-width="1.6" fill="none"/>
<path d="M77 85 Q86 89.5 96 84.8 Q86 87.2 77 85 Z" fill="#c89488"/>
<!-- jaw shade -->
<path d="M58.5 70 Q61 86 72 96" stroke="#a88070" stroke-width="1.6" fill="none" opacity="0.4"/>
<path d="M112.5 72 Q110 88 101 97" stroke="#a07868" stroke-width="1.6" fill="none" opacity="0.45"/>
</g>
</svg>

<div class="abs" style="left:8px;top:27px;width:172px;height:440.50px;background:#fff;box-shadow:0 0 10px rgba(0,0,0,.35)">
<div class="tx" style="left:23.90px;top:9px;line-height:16px;font-size:13px;color:#383838;letter-spacing:0.277px">New...</div>
<div class="tx" style="left:89.80px;top:9px;line-height:16px;font-size:13px;color:#727272;letter-spacing:0.128px">Alt+Ctrl + N</div>
<div class="tx" style="left:24.60px;top:40px;line-height:16px;font-size:13px;color:#383838;letter-spacing:0.062px">Open...</div>
<div class="tx" style="left:113.60px;top:40px;line-height:16px;font-size:13px;color:#727272;letter-spacing:-0.119px">Ctrl + O</div>
<div class="tx" style="left:24.60px;top:71px;line-height:16px;font-size:13px;color:#383838;letter-spacing:-0.010px">Open &amp; Place...</div>
<div class="tx" style="left:24.60px;top:102px;line-height:16px;font-size:13px;color:#383838;letter-spacing:0.350px">Open More</div>
<span class="arr" style="left:149px;top:105px"></span>
<div class="sep" style="top:127px"></div>
<div class="tx" style="left:23.30px;top:140px;line-height:16px;font-size:13px;color:#383838;letter-spacing:0.414px">Publish online</div>
<span class="arr" style="left:149px;top:143px"></span>
<div class="sep" style="top:166px"></div>
<div class="tx" style="left:24.60px;top:179px;line-height:16px;font-size:13px;color:#bbbbbb;transform:scaleX(0.9217);transform-origin:0 0">Save</div>
<div class="tx" style="left:116.20px;top:179px;line-height:16px;font-size:13px;color:#c8c8c8;transform:scaleX(0.9538);transform-origin:0 0">Ctrl + S</div>
<div class="tx" style="left:24.60px;top:210px;line-height:16px;font-size:13px;color:#383838;transform:scaleX(0.9347);transform-origin:0 0">Save as PSD</div>
<div class="tx" style="left:24.60px;top:241px;line-height:16px;font-size:13px;color:#383838;transform:scaleX(0.9357);transform-origin:0 0">Save PSD/PSB...</div>
<div class="tx" style="left:23.60px;top:272px;line-height:16px;font-size:13px;color:#383838;letter-spacing:0.161px">Export as</div>
<span class="arr" style="left:149px;top:275px"></span>
<div class="sep" style="top:297px"></div>
<div class="tx" style="left:23.30px;top:310px;line-height:16px;font-size:13px;color:#383838;letter-spacing:0.165px">Export Layers...</div>
<div class="tx" style="left:23.60px;top:341px;line-height:16px;font-size:13px;color:#383838;letter-spacing:0.275px">Export Color Lookup...</div>
<div class="sep" style="top:367px"></div>
<div class="tx" style="left:23.60px;top:380px;line-height:16px;font-size:13px;color:#383838;letter-spacing:0.103px">File Info...</div>
<div class="sep" style="top:405px"></div>
<div class="tx" style="left:24.60px;top:418px;line-height:16px;font-size:13px;color:#383838;letter-spacing:-0.044px">Script</div>
</div>
<div class="abs" style="left:182px;top:290px;width:130px;height:186px;background:#fff;box-shadow:0 0 16px rgba(0,0,0,.4)">
<div class="tx" style="left:23.20px;top:9px;line-height:16px;font-size:13px;color:#383838;letter-spacing:-0.130px">PNG</div>
<div class="tx" style="left:89.20px;top:9px;line-height:16px;font-size:13px;color:#727272;letter-spacing:1.043px">.png</div>
<div class="abs" style="left:0;top:31px;width:130px;height:31px;background:#bee3fa"></div>
<div class="tx" style="left:23.60px;top:40px;line-height:16px;font-size:13px;color:#383838;transform:scaleX(0.8343);transform-origin:0 0">JPG</div>
<div class="tx" style="left:94.00px;top:40px;line-height:16px;font-size:13px;color:#727272;letter-spacing:0.890px">.jpg</div>
<div class="tx" style="left:24.00px;top:71px;line-height:16px;font-size:13px;color:#383838;transform:scaleX(0.8851);transform-origin:0 0">SVG</div>
<div class="tx" style="left:92.60px;top:71px;line-height:16px;font-size:13px;color:#727272;letter-spacing:0.396px">.svg</div>
<div class="tx" style="left:24.00px;top:102px;line-height:16px;font-size:13px;color:#383838;transform:scaleX(0.9207);transform-origin:0 0">GIF</div>
<div class="tx" style="left:97.60px;top:102px;line-height:16px;font-size:13px;color:#727272;letter-spacing:0.690px">.gif</div>
<div class="tx" style="left:23.03px;top:133px;line-height:16px;font-size:13px;color:#383838;transform:scaleX(0.9657);transform-origin:0 0">PDF</div>
<div class="tx" style="left:92.00px;top:133px;line-height:16px;font-size:13px;color:#727272;letter-spacing:1.109px">.pdf</div>
<div class="tx" style="left:23.00px;top:164px;line-height:16px;font-size:13px;color:#383838;letter-spacing:1.137px">More</div>
<span class="arr" style="left:107px;top:167px"></span>
</div>
<div class="abs" style="left:0;top:0;width:3px;height:28px;background:#f7f7f7;z-index:5"></div><div class="abs" style="left:0;top:28px;width:3px;height:1px;background:#e6e6e6;z-index:5"></div><div class="abs" style="left:0;top:29px;width:3px;height:176px;background:#eeeeee;z-index:5"></div><div class="abs" style="left:0;top:205px;width:3px;height:452px;background:#cfcfcf;z-index:5"></div><div class="abs" style="left:3px;top:0;width:1px;height:657px;background:#ffffff;z-index:5"></div>
</body></html>
